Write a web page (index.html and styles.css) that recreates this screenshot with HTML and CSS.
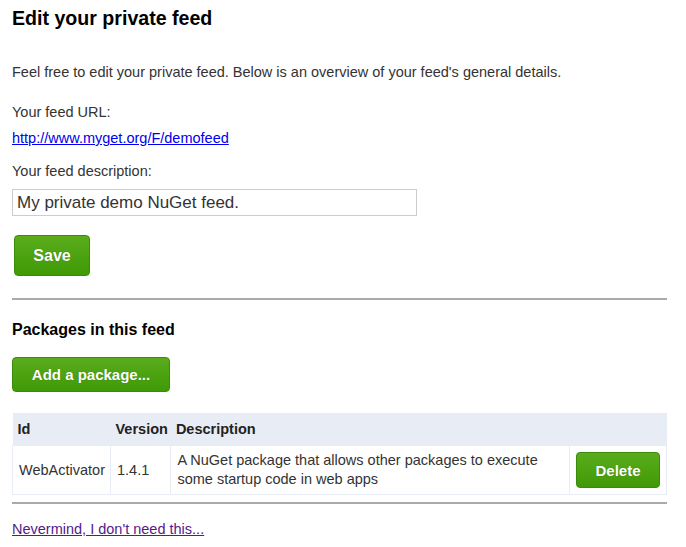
FILE: index.html
```html
<!DOCTYPE html>
<html>
<head>
<meta charset="utf-8">
<link rel="stylesheet" href="styles.css">
</head>
<body>
<div class="page">
  <h1 class="title">Edit your private feed</h1>
  <p class="intro">Feel free to edit your private feed. Below is an overview of your feed's general details.</p>
  <div class="label">Your feed URL:</div>
  <div class="url"><a href="#" class="link">http://www.myget.org/F/demofeed</a></div>
  <div class="label label2">Your feed description:</div>
  <input class="desc" type="text" value="My private demo NuGet feed.">
  <div class="save-row"><button class="btn btn-save">Save</button></div>
  <hr class="rule">
  <h2 class="subtitle">Packages in this feed</h2>
  <button class="btn btn-add">Add a package...</button>
  <table class="pkgs">
    <thead>
      <tr><th class="c-id">Id</th><th class="c-ver">Version</th><th class="c-desc">Description</th><th class="c-act"></th></tr>
    </thead>
    <tbody>
      <tr>
        <td>WebActivator</td>
        <td>1.4.1</td>
        <td>A NuGet package that allows other packages to execute some startup code in web apps</td>
        <td class="act"><button class="btn btn-del">Delete</button></td>
      </tr>
    </tbody>
  </table>
  <hr class="rule rule2">
  <a href="#" class="never">Nevermind, I don't need this...</a>
</div>
</body>
</html>
```
FILE: styles.css
```css
html, body { margin: 0; padding: 0; background: #fff; }
body { font-family: "Liberation Sans", Arial, sans-serif; color: #333; font-size: 14.5px; }
.page { padding: 0 19px 0 12px; }
.title { font-size: 19.6px; font-weight: bold; color: #000; margin: 0; padding-top: 7px; line-height: 22px; }
.intro { margin: 33px 0 0; line-height: 20px; }
.label { margin-top: 20px; line-height: 20px; }
.label2 { margin-top: 13px; }
.url { margin-top: 6px; line-height: 20px; }
.link { color: #0000ee; }
.desc { display: block; margin-top: 8px; width: 405px; height: 27px; box-sizing: border-box; border: 1px solid #ccc; padding: 0 4px; font-family: Arial, "Liberation Sans", sans-serif; font-size: 17px; color: #333; }
.save-row { margin-top: 19px; padding-left: 2px; }
.btn { font-family: "Liberation Sans", Arial, sans-serif; font-weight: bold; color: #fff; border: 1px solid #3b8a0c; border-radius: 4px; background: linear-gradient(#5aac1c, #3f9a06); cursor: pointer; text-shadow: 0 0 1px rgba(0,0,0,.3); }
.btn-save { width: 76px; height: 41px; font-size: 16px; }
.rule { border: 0; border-top: 2px solid #aaa; margin: 22px 0 0; height: 0; }
.subtitle { font-size: 16px; font-weight: bold; color: #000; margin: 21px 0 0; line-height: 18px; }
.btn-add { margin-top: 18px; width: 158px; height: 35px; font-size: 15px; }
.pkgs { margin-top: 21px; width: 100%; border-collapse: collapse; }
.pkgs th { background: #e8edf5; text-align: left; height: 32px; padding: 0 3px 0 5px; font-size: 14.5px; color: #222; }
.pkgs td { border: 1px solid #e8edf5; padding: 4px 3px 4px 6px; height: 40px; line-height: 19px; vertical-align: middle; }
.c-id { width: 90px; }
.c-ver { width: 50px; }
.c-act { width: 88px; }
.pkgs td.act { text-align: center; padding: 4px 6px; }
.btn-del { width: 84px; height: 36px; font-size: 15px; }
.rule2 { margin-top: 7px; }
.never { display: inline-block; margin-top: 17px; color: #551a8b; }
```
